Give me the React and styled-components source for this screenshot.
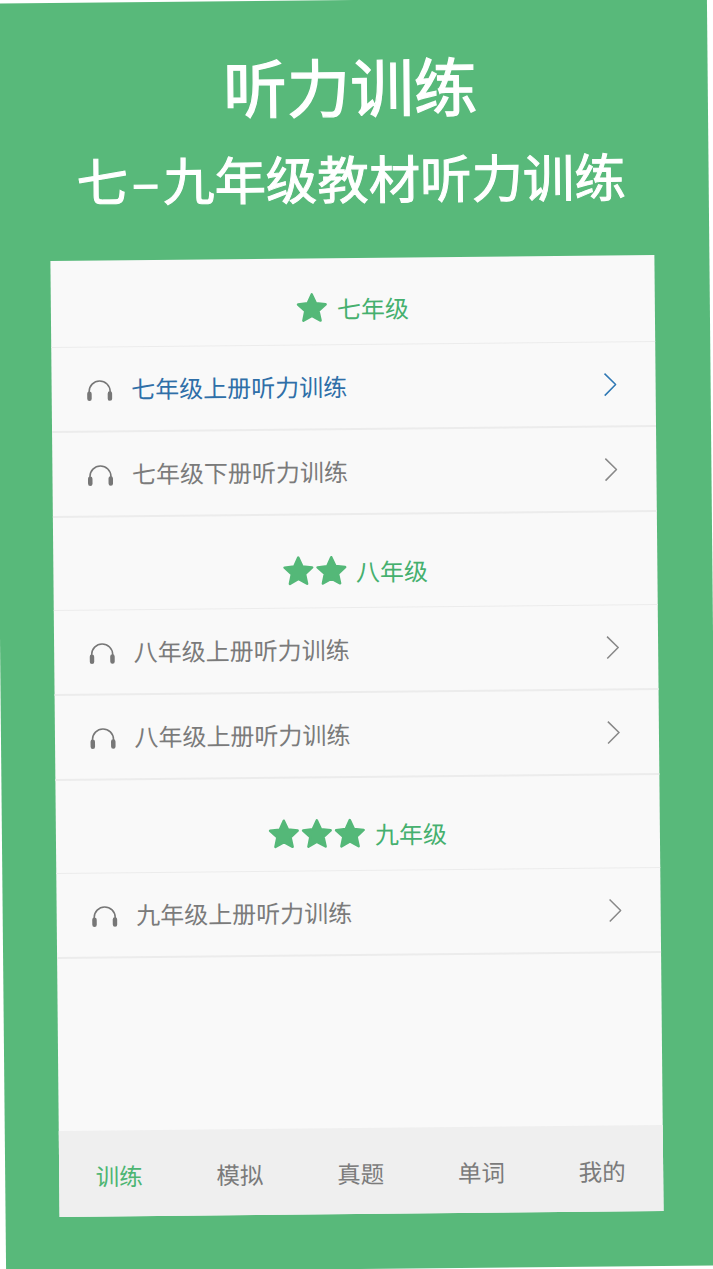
import React from "react";
import styled, { createGlobalStyle } from "styled-components";

const GlobalStyle = createGlobalStyle`
  html, body {
    margin: 0;
    padding: 0;
    background: #fff;
    overflow: hidden;
  }
`;

const Stage = styled.div`
  width: 713px;
  height: 1269px;
  box-sizing: border-box;
  padding: 48px 2px 0 0;
  background: #58b97a;
  transform: rotate(-0.55deg);
  font-family: "Noto Sans CJK SC", sans-serif;
  display: flex;
  flex-direction: column;
  align-items: center;
`;

const Title = styled.h1`
  margin: 0;
  font-size: 63.5px;
  line-height: 72px;
  font-weight: 400;
  color: #fff;
  -webkit-text-stroke: 1.2px #fff;
`;

const Subtitle = styled.h2`
  margin: 27px 0 0;
  font-size: 51.4px;
  line-height: 60px;
  font-weight: 400;
  color: #fff;
  white-space: nowrap;
  -webkit-text-stroke: 1px #fff;
`;

const Dash = styled.span`
  margin: 0 3.8px;
`;

const Card = styled.div`
  width: 604px;
  height: 956px;
  margin-top: 51px;
  background: #f9f9f9;
  display: flex;
  flex-direction: column;
`;

const List = styled.div`
  flex: 1;
`;

const SectionHead = styled.div`
  height: ${(p) => (p.$first ? 87 : 93)}px;
  box-sizing: border-box;
  padding-bottom: 20px;
  border-bottom: 1px solid #ececec;
  display: flex;
  align-items: flex-end;
  justify-content: center;
  gap: 9px;
  font-size: 24px;
  line-height: 32px;
  color: #45b06e;
`;

const Stars = styled.span`
  display: flex;
  gap: 1px;
`;

const Row = styled.div`
  height: 85px;
  box-sizing: border-box;
  border-bottom: 2px solid #ececec;
  padding: 0 38.5px 0 35.5px;
  display: flex;
  align-items: center;
  gap: 18.5px;
  font-size: 24px;
  color: ${(p) => (p.$active ? "#2f6fa8" : "#7b7b7b")};
`;

const RowLabel = styled.span`
  flex: 1;
  padding-bottom: 2px;
`;

const HeadphoneIcon = styled.svg`
  margin-top: 3px;
`;

const TabBar = styled.div`
  height: 86px;
  background: #efefef;
  display: grid;
  grid-template-columns: repeat(5, 1fr);
`;

const Tab = styled.div`
  display: flex;
  align-items: center;
  justify-content: center;
  padding-top: 3px;
  font-size: 23.5px;
  color: ${(p) => (p.$active ? "#4cb572" : "#7b7b7b")};
`;

const Star = () => (
  <svg width="32" height="32" viewBox="0 0 32 32">
    <path
      d="M16 2l4.1 8.9 9.7 1.1-7.2 6.6 2 9.6-8.6-4.8-8.6 4.8 2-9.6L2.2 12l9.7-1.1z"
      fill="#54b878"
      stroke="#54b878"
      strokeWidth="2.5"
      strokeLinejoin="round"
    />
  </svg>
);

const Headphones = () => (
  <HeadphoneIcon width="26" height="22" viewBox="0 0 26 22">
    <path d="M2.5 15v-3a10.5 10.5 0 0 1 21 0v3" fill="none" stroke="#777" strokeWidth="1.6" />
    <rect x="0.5" y="12" width="4.5" height="9.5" rx="2.25" fill="#777" />
    <rect x="21" y="12" width="4.5" height="9.5" rx="2.25" fill="#777" />
  </HeadphoneIcon>
);

const Chevron = ({ color }) => (
  <svg width="13" height="24" viewBox="0 0 13 24">
    <path d="M1 1l11 11L1 23" fill="none" stroke={color} strokeWidth="1.5" />
  </svg>
);

const sections = [
  { stars: 1, name: "七年级", rows: ["七年级上册听力训练", "七年级下册听力训练"] },
  { stars: 2, name: "八年级", rows: ["八年级上册听力训练", "八年级上册听力训练"] },
  { stars: 3, name: "九年级", rows: ["九年级上册听力训练"] },
];

const tabs = ["训练", "模拟", "真题", "单词", "我的"];

export default function App() {
  return (
    <>
      <GlobalStyle />
      <Stage>
        <Title>听力训练</Title>
        <Subtitle>
          七<Dash>–</Dash>九年级教材听力训练
        </Subtitle>
        <Card>
          <List>
            {sections.map((section, i) => (
              <div key={section.name}>
                <SectionHead $first={i === 0}>
                  <Stars>
                    {Array.from({ length: section.stars }, (_, n) => (
                      <Star key={n} />
                    ))}
                  </Stars>
                  <span>{section.name}</span>
                </SectionHead>
                {section.rows.map((label, r) => {
                  const active = i === 0 && r === 0;
                  return (
                    <Row key={r} $active={active}>
                      <Headphones />
                      <RowLabel>{label}</RowLabel>
                      <Chevron color={active ? "#2f78b4" : "#888"} />
                    </Row>
                  );
                })}
              </div>
            ))}
          </List>
          <TabBar>
            {tabs.map((tab, i) => (
              <Tab key={tab} $active={i === 0}>
                {tab}
              </Tab>
            ))}
          </TabBar>
        </Card>
      </Stage>
    </>
  );
}
